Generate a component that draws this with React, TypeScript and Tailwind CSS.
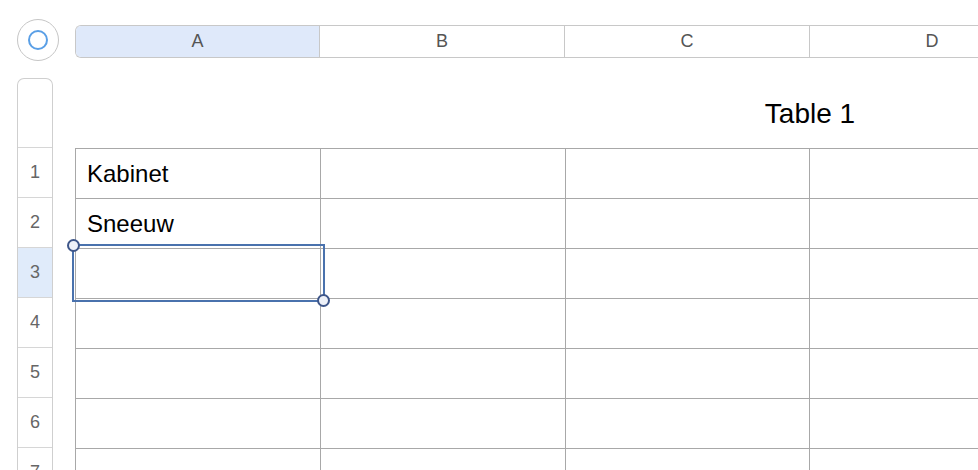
import React from 'react';

const columns = ['A', 'B', 'C', 'D', 'E', 'F'];
const rows = [1, 2, 3, 4, 5, 6, 7, 8];
const values: Record<string, string> = { A1: 'Kabinet', A2: 'Sneeuw' };

export default function App() {
  return (
    <div className="w-[978px] h-[470px] overflow-hidden bg-white font-['Liberation_Sans',Arial,sans-serif]">
      {/* top bar: corner button + column headers */}
      <div className="flex items-start pt-[19px] pl-[17px]">
        <div className="w-[42px] h-[42px] shrink-0 rounded-full border border-[#c6c6c6] flex items-center justify-center">
          <div className="w-[20px] h-[20px] rounded-full border-2 border-[#5a9fe6]" />
        </div>
        <div className="ml-[16px] mt-[6px] flex h-[33px] shrink-0 rounded-l-[6px] border border-r-0 border-[#c8c8c8] overflow-hidden">
          {columns.map((c, i) => (
            <div
              key={c}
              className={
                'flex items-center justify-center text-[18px] text-[#555] border-r border-[#c8c8c8] ' +
                (i === 0 ? 'w-[244px] bg-[#dfe9fa]' : 'w-[245px] bg-white')
              }
            >
              {c}
            </div>
          ))}
        </div>
      </div>

      <div className="flex items-start pl-[17px] mt-[17px] gap-[22px]">
        {/* row headers */}
        <div className="w-[36px] shrink-0 rounded-t-[7px] border border-b-0 border-[#cfcfcf] overflow-hidden">
          <div className="h-[69px] border-b border-[#d6d6d6]" />
          {rows.map((r) => (
            <div
              key={r}
              className={
                'h-[50px] flex items-center justify-center text-[18px] text-[#666] border-b border-[#d6d6d6] ' +
                (r === 3 ? 'bg-[#e0ebfa]' : 'bg-white')
              }
            >
              {r}
            </div>
          ))}
        </div>

        {/* table */}
        <div className="flex flex-col w-[1470px] shrink-0">
          <div className="h-[70px] flex items-center justify-center text-[28px] text-black pt-[2px]">Table 1</div>
          <div className="relative border-t border-l border-[#a8a8a8]">
            {rows.map((r) => (
              <div key={r} className="flex h-[50px]">
                {columns.map((c) => (
                  <div
                    key={c}
                    className="w-[245px] border-r border-b border-[#a8a8a8] flex items-center pl-[11px] text-[24px] text-black"
                  >
                    {values[c + r] ?? ''}
                  </div>
                ))}
              </div>
            ))}
            {/* selection on A3 */}
            <div className="absolute left-[-4px] top-[95px] w-[253px] h-[58px] border-2 border-[#4a72ad]">
              <div className="absolute left-[-7px] top-[-7px] w-[13px] h-[13px] rounded-full bg-[#eef1f8] border-2 border-[#3e5689]" />
              <div className="absolute right-[-7px] bottom-[-7px] w-[13px] h-[13px] rounded-full bg-[#eef1f8] border-2 border-[#3e5689]" />
            </div>
          </div>
        </div>
      </div>
    </div>
  );
}
